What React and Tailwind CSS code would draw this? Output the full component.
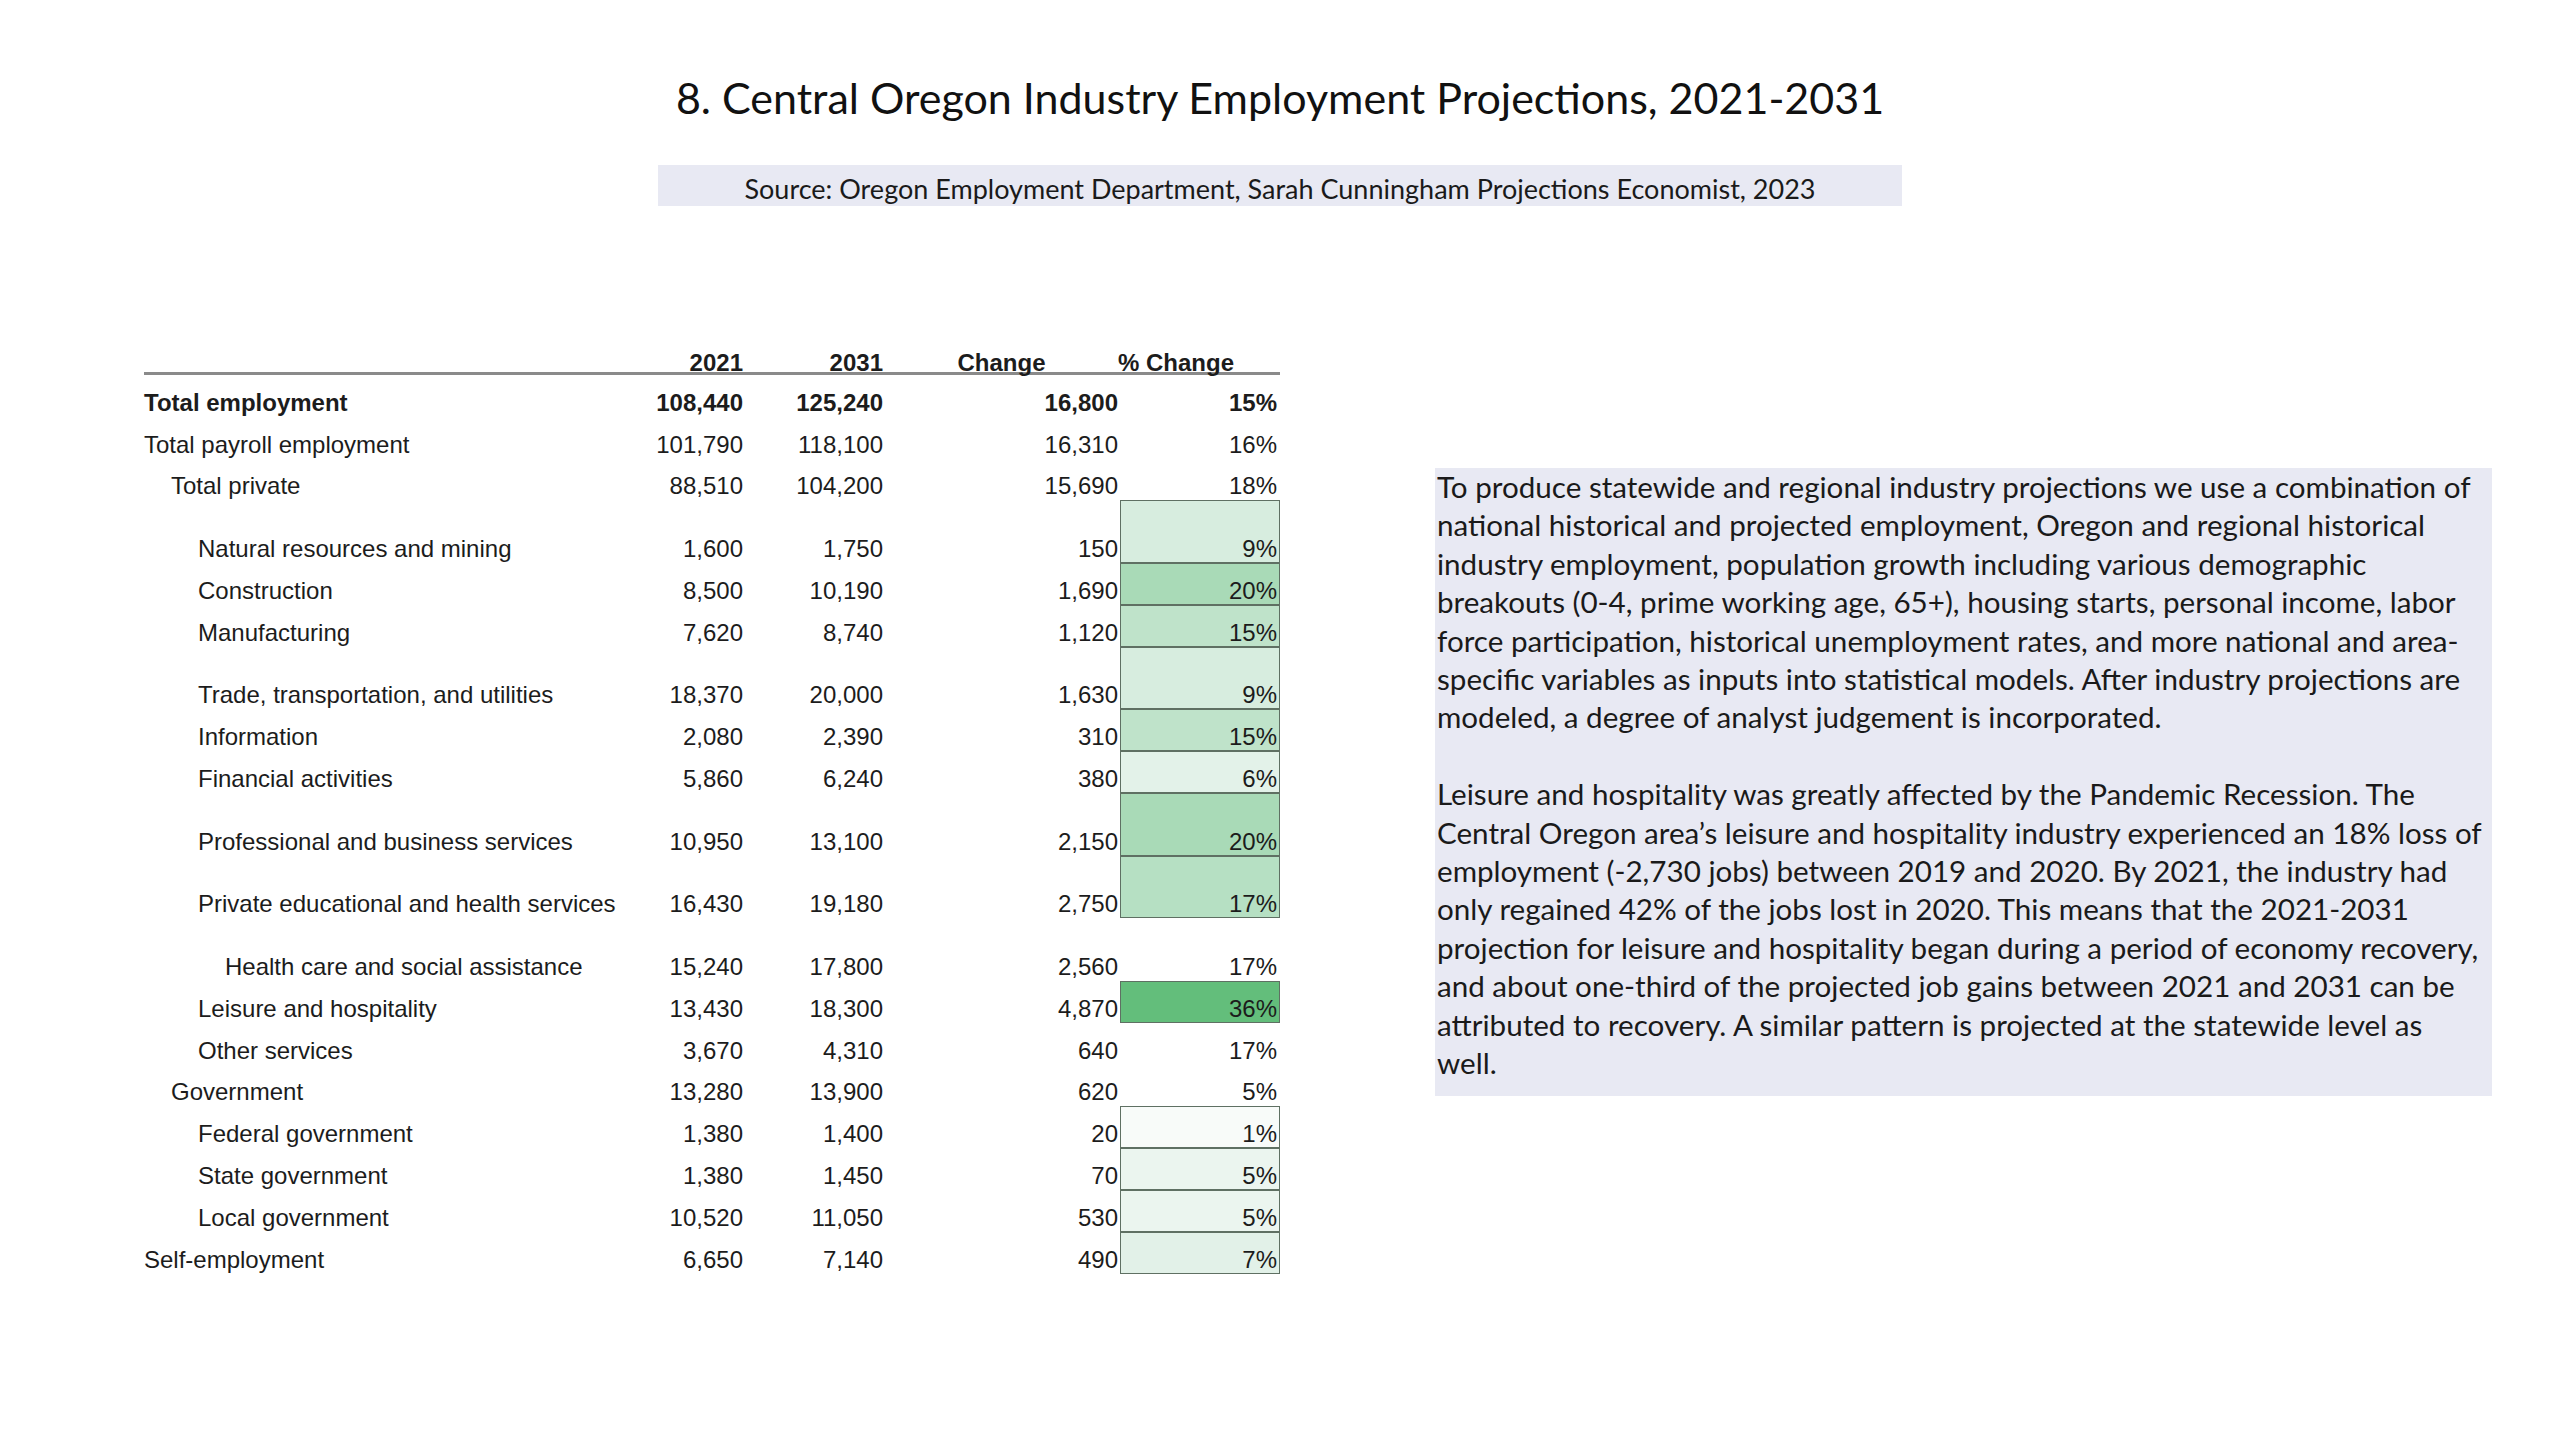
import React from "react";

const rows = [
  { label: "Total employment", lvl: 0, a: "108,440", b: "125,240", c: "16,800", p: "15%", bold: true },
  { label: "Total payroll employment", lvl: 0, a: "101,790", b: "118,100", c: "16,310", p: "16%" },
  { label: "Total private", lvl: 1, a: "88,510", b: "104,200", c: "15,690", p: "18%" },
  { label: "Natural resources and mining", lvl: 2, a: "1,600", b: "1,750", c: "150", p: "9%", tall: true, fill: "bg-[#d7eddf]" },
  { label: "Construction", lvl: 2, a: "8,500", b: "10,190", c: "1,690", p: "20%", fill: "bg-[#a9dab7]" },
  { label: "Manufacturing", lvl: 2, a: "7,620", b: "8,740", c: "1,120", p: "15%", fill: "bg-[#bfe3ca]" },
  { label: "Trade, transportation, and utilities", lvl: 2, a: "18,370", b: "20,000", c: "1,630", p: "9%", tall: true, fill: "bg-[#d7eddf]" },
  { label: "Information", lvl: 2, a: "2,080", b: "2,390", c: "310", p: "15%", fill: "bg-[#bfe3ca]" },
  { label: "Financial activities", lvl: 2, a: "5,860", b: "6,240", c: "380", p: "6%", fill: "bg-[#e3f2e9]" },
  { label: "Professional and business services", lvl: 2, a: "10,950", b: "13,100", c: "2,150", p: "20%", tall: true, fill: "bg-[#a9dab7]" },
  { label: "Private educational and health services", lvl: 2, a: "16,430", b: "19,180", c: "2,750", p: "17%", tall: true, fill: "bg-[#b6e0c3]" },
  { label: "Health care and social assistance", lvl: 3, a: "15,240", b: "17,800", c: "2,560", p: "17%", tall: true },
  { label: "Leisure and hospitality", lvl: 2, a: "13,430", b: "18,300", c: "4,870", p: "36%", fill: "bg-[#63be7b]" },
  { label: "Other services", lvl: 2, a: "3,670", b: "4,310", c: "640", p: "17%" },
  { label: "Government", lvl: 1, a: "13,280", b: "13,900", c: "620", p: "5%" },
  { label: "Federal government", lvl: 2, a: "1,380", b: "1,400", c: "20", p: "1%", fill: "bg-[#f8fbf9]" },
  { label: "State government", lvl: 2, a: "1,380", b: "1,450", c: "70", p: "5%", fill: "bg-[#ebf5ef]" },
  { label: "Local government", lvl: 2, a: "10,520", b: "11,050", c: "530", p: "5%", fill: "bg-[#ebf5ef]" },
  { label: "Self-employment", lvl: 0, a: "6,650", b: "7,140", c: "490", p: "7%", fill: "bg-[#e2f1e8]" },
];

const indent = ["pl-0", "pl-[27px]", "pl-[54px]", "pl-[81px]"];

const para1 = [
  "To produce statewide and regional industry projections we use a combination of",
  "national historical and projected employment, Oregon and regional historical",
  "industry employment, population growth including various demographic",
  "breakouts (0-4, prime working age, 65+), housing starts, personal income, labor",
  "force participation, historical unemployment rates, and more national and area-",
  "specific variables as inputs into statistical models. After industry projections are",
  "modeled, a degree of analyst judgement is incorporated.",
];

const para2 = [
  "Leisure and hospitality was greatly affected by the Pandemic Recession. The",
  "Central Oregon area\u2019s leisure and hospitality industry experienced an 18% loss of",
  "employment (-2,730 jobs) between 2019 and 2020. By 2021, the industry had",
  "only regained 42% of the jobs lost in 2020. This means that the 2021-2031",
  "projection for leisure and hospitality began during a period of economy recovery,",
  "and about one-third of the projected job gains between 2021 and 2031 can be",
  "attributed to recovery. A similar pattern is projected at the statewide level as",
  "well.",
];

function Row({ r }) {
  const h = r.tall ? "h-[62.7px]" : "h-[41.8px]";
  const weight = r.bold ? "font-bold" : "font-normal";
  return (
    <div className={`grid grid-cols-[480px_119px_140px_237px_160px] ${h} ${weight}`}>
      <div className={`flex items-end pb-[2px] ${indent[r.lvl]} whitespace-nowrap`}>{r.label}</div>
      <div className="flex items-end justify-end pb-[2px]">{r.a}</div>
      <div className="flex items-end justify-end pb-[2px]">{r.b}</div>
      <div className="flex items-end justify-end pb-[2px] pr-[2px]">{r.c}</div>
      <div
        className={`flex items-end justify-end pb-[2px] pr-[3px] ${
          r.fill ? `${r.fill} shadow-[inset_0_0_0_1px_#5f7063]` : ""
        }`}
      >
        {r.p}
      </div>
    </div>
  );
}

export default function App() {
  return (
    <div className="w-[2560px] h-[1440px] bg-white overflow-hidden flex flex-col text-[#1c1c1c]">
      <div className="pt-[72px] h-[124px] text-center font-['Lato','Open_Sans',sans-serif] text-[43px] leading-[52px] text-[#111]">
        8. Central Oregon Industry Employment Projections, 2021-2031
      </div>
      <div className="mt-[41px] mx-auto w-[1244px] h-[41px] bg-[#e8e9f3] flex items-center justify-center pt-[6px] font-['Lato','Open_Sans',sans-serif] text-[27px] leading-[34px] text-[#1a1a1a]">
        Source: Oregon Employment Department, Sarah Cunningham Projections Economist, 2023
      </div>
      <div className="flex items-start">
        <div className="ml-[144px] mt-[126px] w-[1136px] font-['Liberation_Sans',Arial,sans-serif] text-[24px] leading-[24px]">
          <div className="grid grid-cols-[480px_119px_140px_237px_160px] h-[43px] border-b-[3px] border-[#8a8a8a] font-bold leading-[18px]">
            <div />
            <div className="flex items-end justify-end">2021</div>
            <div className="flex items-end justify-end">2031</div>
            <div className="flex items-end justify-center">Change</div>
            <div className="flex items-end justify-start ml-[-2px]">% Change</div>
          </div>
          {rows.map((r) => (
            <Row key={r.label} r={r} />
          ))}
        </div>
        <div className="ml-[155px] mt-[262px] w-[1057px] h-[628px] bg-[#e8e9f3] pl-[2px] font-['Lato','Open_Sans',sans-serif] text-[29.6px] leading-[38.4px] text-[#1a1a1a]">
          {para1.map((l) => (
            <div key={l} className="whitespace-nowrap">{l}</div>
          ))}
          <div className="h-[38.4px]" />
          {para2.map((l) => (
            <div key={l} className="whitespace-nowrap">{l}</div>
          ))}
        </div>
      </div>
    </div>
  );
}
